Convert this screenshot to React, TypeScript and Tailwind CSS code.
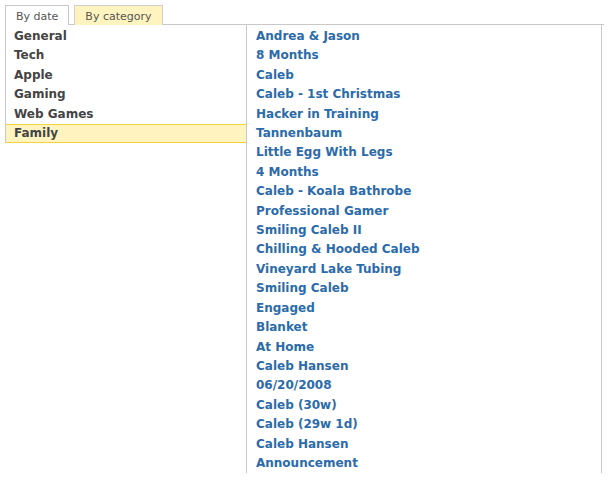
const categories = ["General", "Tech", "Apple", "Gaming", "Web Games", "Family"]

const posts = [
  "Andrea & Jason",
  "8 Months",
  "Caleb",
  "Caleb - 1st Christmas",
  "Hacker in Training",
  "Tannenbaum",
  "Little Egg With Legs",
  "4 Months",
  "Caleb - Koala Bathrobe",
  "Professional Gamer",
  "Smiling Caleb II",
  "Chilling & Hooded Caleb",
  "Vineyard Lake Tubing",
  "Smiling Caleb",
  "Engaged",
  "Blanket",
  "At Home",
  "Caleb Hansen",
  "06/20/2008",
  "Caleb (30w)",
  "Caleb (29w 1d)",
  "Caleb Hansen",
  "Announcement",
]

export default function App() {
  return (
    <div className="bg-white min-h-[485px] pt-[5px] pl-[5px] font-['DejaVu_Sans',sans-serif]">
      <div className="flex w-[599px] h-[20px]">
        <div className="border border-b-0 border-[#c8c8c8] px-[10px] text-[11px] leading-[21px] text-[#555]">By date</div>
        <div className="w-[5px] border-b border-[#c8c8c8]" />
        <div className="border border-b-0 border-[#d0d0d0] bg-[#fff4c0] px-[10px] text-[11px] leading-[21px] text-[#555]">By category</div>
        <div className="flex-1 border-b border-[#c8c8c8]" />
      </div>
      <div className="flex">
        <ul className="w-[241px] self-start border-l border-[#c8c8c8] pt-[2px]">
          {categories.map((c) =>
            c === "Family" ? (
              <li key={c} className="border-y border-[#f5d33a] bg-[#fff4c0] pl-[8px] text-[12px] font-bold leading-[17.4px] text-[#444]">
                {c}
              </li>
            ) : (
              <li key={c} className="pl-[8px] text-[12px] font-bold leading-[19.4px] text-[#444]">
                {c}
              </li>
            )
          )}
        </ul>
        <ul className="w-[356px] border-x border-[#c8c8c8] pl-[9px] pt-[2px]">
          {posts.map((p, i) => (
            <li key={i} className="text-[12px] font-bold leading-[19.4px] text-[#2b6bab]">
              {p}
            </li>
          ))}
        </ul>
      </div>
    </div>
  )
}
